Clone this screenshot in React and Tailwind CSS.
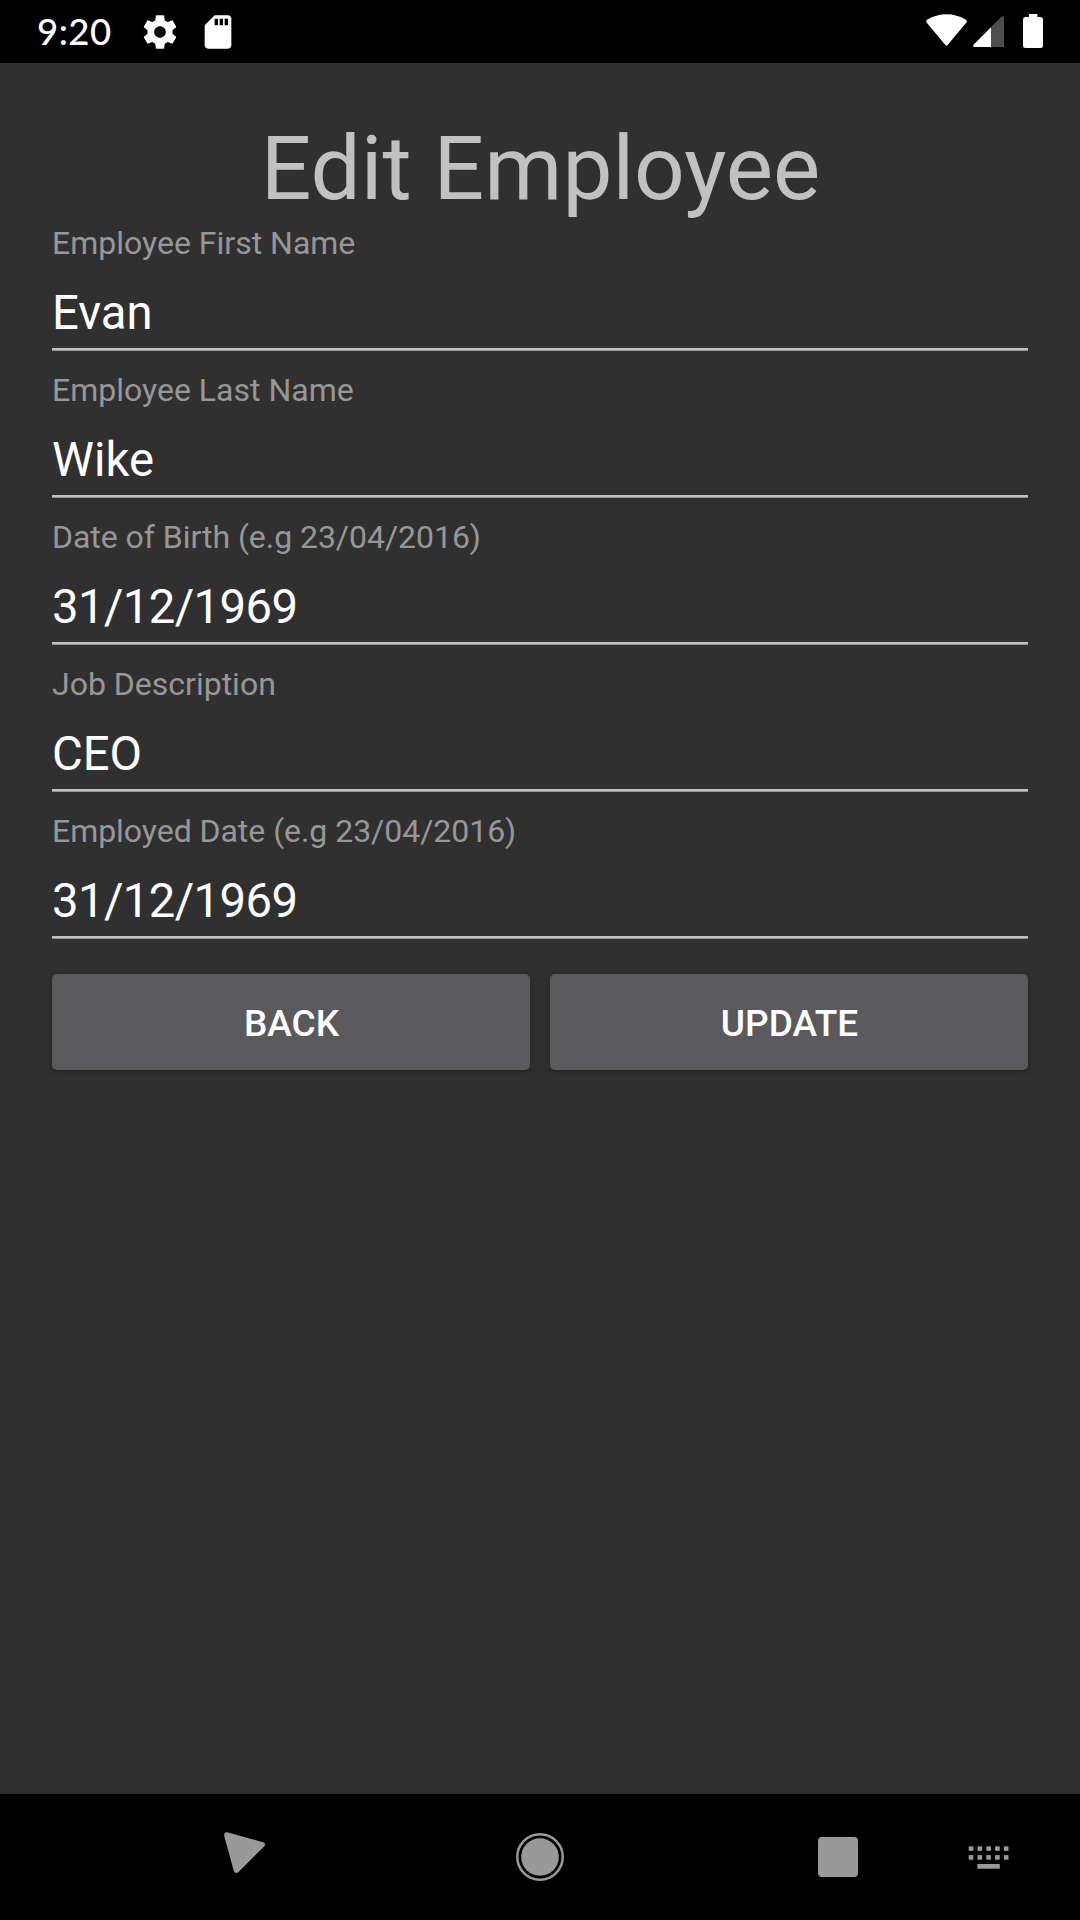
const FIELDS = [
  ['Employee First Name', 'Evan'],
  ['Employee Last Name', 'Wike'],
  ['Date of Birth (e.g 23/04/2016)', '31/12/1969'],
  ['Job Description', 'CEO'],
  ['Employed Date (e.g 23/04/2016)', '31/12/1969'],
];

function Field({ label, value }) {
  return (
    <label className="block h-[147px]">
      <span className={`block h-[43px] pt-[3px] text-[32px] leading-[37px] text-[#979797] ${label.includes('/') ? 'tracking-[-0.04px]' : ''}`}>{label}</span>
      <span className={`block h-[85px] border-b-2 border-[#c1c1c1] pt-[21px] text-[47.25px] leading-[55px] text-white shadow-[0_1px_0_#929292] ${value.includes('/') ? 'tracking-[-0.6px]' : ''}`}>{value}</span>
    </label>
  );
}

function StatusBar() {
  return (
    <header className="flex h-[63px] items-start bg-black text-white">
      <span className="ml-[37px] w-[103px] font-['Lato',sans-serif] text-[36.5px] font-medium leading-[62px] tracking-[0.5px]">9:20</span>
      <svg className="mt-3 h-[40px] w-[40px]" viewBox="0 0 24 24" fill="currentColor">
        <path d="M19.43 12.98c.04-.32.07-.64.07-.98s-.03-.66-.07-.98l2.11-1.65c.19-.15.24-.42.12-.64l-2-3.46c-.12-.22-.39-.3-.61-.22l-2.49 1c-.52-.4-1.08-.73-1.69-.98l-.38-2.65C14.46 2.18 14.25 2 14 2h-4c-.25 0-.46.18-.49.42l-.38 2.65c-.61.25-1.17.59-1.69.98l-2.49-1c-.23-.09-.49 0-.61.22l-2 3.46c-.13.22-.07.49.12.64l2.11 1.65c-.04.32-.07.65-.07.98s.03.66.07.98l-2.11 1.65c-.19.15-.24.42-.12.64l2 3.46c.12.22.39.3.61.22l2.49-1c.52.4 1.08.73 1.69.98l.38 2.65c.03.24.24.42.49.42h4c.25 0 .46-.18.49-.42l.38-2.65c.61-.25 1.17-.59 1.69-.98l2.49 1c.23.09.49 0 .61-.22l2-3.46c.12-.22.07-.49-.12-.64l-2.11-1.65zM12 15.5c-1.93 0-3.5-1.57-3.5-3.5s1.57-3.5 3.5-3.5 3.5 1.57 3.5 3.5-1.57 3.5-3.5 3.5z" />
      </svg>
      <svg className="ml-[18px] mt-3 h-[40px] w-[40px]" viewBox="0 0 24 24" fill="currentColor">
        <path d="M18 2h-8L4.02 8 4 20c0 1.1.9 2 2 2h12c1.1 0 2-.9 2-2V4c0-1.1-.9-2-2-2zm-6 6h-2V4h2v4zm3 0h-2V4h2v4zm3 0h-2V4h2v4z" />
      </svg>
      <svg className="ml-auto mt-[14px] h-[32px] w-[41px]" viewBox="0 0 41 32" fill="currentColor">
        <path d="M.8 8.8C-.1 7.8 0 6.5 1.1 5.8C12.5-1.6 28.5-1.6 39.9 5.8C41 6.5 41.1 7.8 40.2 8.8L21.6 31C20.9 32 20.1 32 19.4 31Z" />
      </svg>
      <svg className="ml-[6px] mt-4 h-[31px] w-[31px]" viewBox="0 0 31 31">
        <path d="M18 31V11.3L28.5.6Q31-.7 31 1.8V31Z" fill="#4d4d4d" />
        <path d="M18 31H1.2Q-.6 30.4.5 28.7L18 11.2Z" fill="#fff" />
      </svg>
      <svg className="ml-[19px] mr-[37px] mt-[14px] h-[34px] w-[20px]" viewBox="0 0 20 34" fill="currentColor">
        <path d="M6 3V0h8.4v3H17.5Q20 3.2 20 5.5V31.5Q20 34 17.5 34H2.5Q0 34 0 31.5V5.5Q0 3.2 2.5 3Z" />
      </svg>
    </header>
  );
}

function NavBar() {
  return (
    <footer className="flex h-[126px] items-start bg-black text-[#999]">
      <svg className="ml-[224px] mt-[38px] h-[42px] w-[42px]" viewBox="0 0 42 42" fill="currentColor">
        <path d="M3.1.3L39.3 10.2Q42.2 11.5 40.3 14.3L14.6 40Q11.6 42.3 9.9 39.3L.2 4Q0 .1 3.1.3Z" />
      </svg>
      <svg className="ml-[250px] mt-[39px] h-[48px] w-[48px]" viewBox="0 0 48 48" fill="currentColor">
        <circle cx="24" cy="24" r="22.7" fill="none" stroke="currentColor" strokeWidth="2.5" />
        <circle cx="24" cy="24" r="18.8" />
      </svg>
      <div className="ml-[254px] mt-[43px] h-[40px] w-[40px] rounded-[4px] bg-[#999]" />
      <svg className="ml-[110px] mt-[52px] h-[24px] w-[42px]" viewBox="0 0 42 24" fill="currentColor">
        {[0.7, 9.5, 18.3, 27.1, 35.9].map((x) => (
          <g key={x}>
            <rect x={x} y="0.3" width="4.6" height="4.6" />
            <rect x={x} y="9.1" width="4.6" height="4.6" />
          </g>
        ))}
        <rect x="9.3" y="18" width="22.5" height="4.7" />
      </svg>
    </footer>
  );
}

const BUTTON = 'h-[96px] flex-1 rounded-[5px] bg-[#5a5a5c] pl-px pt-[3px] text-[37px] font-medium leading-[44px] text-white shadow-[0_2px_5px_rgba(0,0,0,0.28)]';

export default function App() {
  return (
    <div className="flex h-[1920px] w-[1080px] flex-col overflow-hidden bg-[#303030] font-['Roboto',sans-serif]">
      <StatusBar />
      <main className="flex-1 px-[52px] pt-[52px]">
        <h1 className="h-[107px] pl-px text-center text-[89.1px] leading-[107px] text-[#c1c1c1]">Edit Employee</h1>
        {FIELDS.map(([label, value]) => <Field key={label} label={label} value={value} />)}
        <div className="mt-[17px] flex gap-5">
          <button className={BUTTON}>BACK</button>
          <button className={BUTTON}>UPDATE</button>
        </div>
      </main>
      <NavBar />
    </div>
  );
}
